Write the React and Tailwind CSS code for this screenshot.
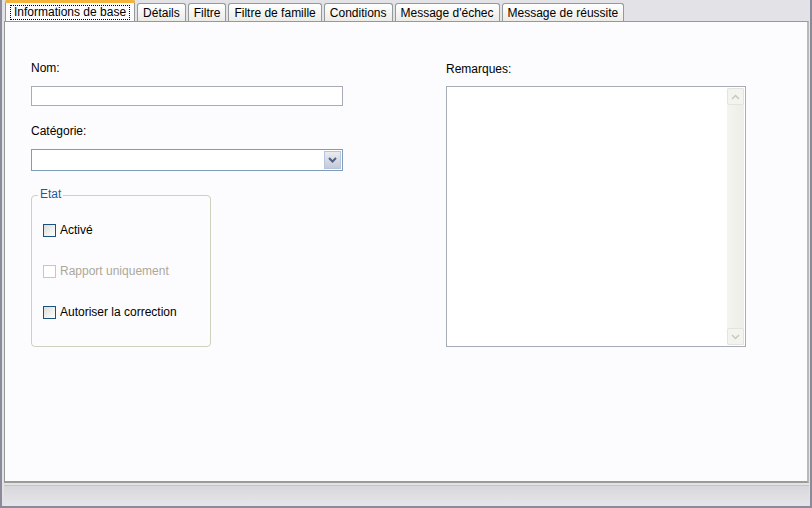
import React from "react";

const font = { fontFamily: "Tahoma, 'Liberation Sans', Arial, sans-serif" };

function Tab({ label, active }) {
  if (active) {
    return (
      <div className="relative -mb-px h-[21px] flex flex-col border border-b-0 border-[#919b9c] bg-[#fcfcfe] rounded-t-[3px] z-10">
        <div className="h-[3px] bg-[#f6b33c] rounded-t-[2px] -mx-px -mt-px" />
        <div className="flex-1 flex items-center px-[4px]">
          <span className="border border-dotted border-black px-[3px] leading-[13px] text-[12px] text-black">{label}</span>
        </div>
      </div>
    );
  }
  return (
    <div className="mt-[3px] h-[18px] flex items-center px-[5px] border border-b-0 border-[#919b9c] rounded-t-[3px] bg-gradient-to-b from-[#ffffff] to-[#ecebe6] text-[12px] text-black leading-none">
      {label}
    </div>
  );
}

function Checkbox({ label, disabled }) {
  return (
    <div className="flex items-center gap-[4px] h-[14px]">
      <div
        className={
          disabled
            ? "w-[13px] h-[13px] border border-[#c9c7ba] bg-white"
            : "w-[13px] h-[13px] border border-[#1c5180] bg-gradient-to-br from-[#dcdcd7] to-[#ffffff]"
        }
      />
      <span className={disabled ? "text-[12px] text-[#aca899]" : "text-[12px] text-black"}>{label}</span>
    </div>
  );
}

export default function App() {
  return (
    <div className="w-[812px] h-[508px] bg-[#e3e2e6] flex flex-col overflow-hidden" style={font}>
      <div className="flex-1 flex flex-col border-l-[2px] border-r-[2px] border-b-[2px] border-[#8a8a9a]">
        <div className="flex-1 flex flex-col pl-[2px] pr-[1px]">
          <div className="flex items-start gap-[2px] pl-[1px] h-[21px]">
            <Tab label="Informations de base" active />
            <Tab label="Détails" />
            <Tab label="Filtre" />
            <Tab label="Filtre de famille" />
            <Tab label="Conditions" />
            <Tab label="Message d'échec" />
            <Tab label="Message de réussite" />
          </div>
          <div className="h-[462px] border border-[#919b9c] border-b-[2px] border-b-[#9a9c96] border-r-[2px] border-r-[#b8bab4] bg-[#fcfcfe] flex gap-[103px] pl-[26px] pt-[38px]">
            <div className="flex flex-col w-[312px]">
              <div className="text-[12px] text-black leading-[13px] pt-[2px]">Nom:</div>
              <div className="mt-[11px] h-[20px] border border-[#a5acb5] bg-white" />
              <div className="mt-[19px] text-[12px] text-black leading-[13px]">Catégorie:</div>
              <div className="mt-[11px] h-[22px] border border-[#7f9db9] bg-white flex justify-end items-stretch p-px">
                <div className="w-[17px] border border-[#b5c4e0] bg-gradient-to-b from-[#ebebee] to-[#c5c9d8] flex items-center justify-center">
                  <svg width="9" height="6" viewBox="0 0 9 6">
                    <path d="M1 1 L4.5 4.5 L8 1" stroke="#4d6185" strokeWidth="2" fill="none" />
                  </svg>
                </div>
              </div>
              <div className="relative mt-[24px] w-[180px] h-[152px] border border-[#d0d0bf] rounded-[4px]">
                <div className="absolute -top-[8px] left-[6px] px-[2px] bg-[#fcfcfe] text-[12px] leading-[13px] text-[#1f5a9a]">Etat</div>
                <div className="flex flex-col gap-[27px] pl-[11px] pt-[27px]">
                  <Checkbox label="Activé" />
                  <Checkbox label="Rapport uniquement" disabled />
                  <Checkbox label="Autoriser la correction" />
                </div>
              </div>
            </div>
            <div className="flex flex-col w-[300px]">
              <div className="text-[12px] text-black leading-[13px] pt-[3px]">Remarques:</div>
              <div className="mt-[10px] h-[261px] border border-[#a5acb5] bg-white flex justify-end p-px">
                <div className="w-[17px] flex flex-col bg-gradient-to-r from-[#f4f4f0] to-[#eeeee8]">
                  <div className="h-[17px] border border-[#e4e4dc] rounded-[2px] bg-[#f4f4ef] flex items-center justify-center">
                    <svg width="9" height="6" viewBox="0 0 9 6">
                      <path d="M1 5 L4.5 1.5 L8 5" stroke="#c8c8c0" strokeWidth="1.5" fill="none" />
                    </svg>
                  </div>
                  <div className="flex-1" />
                  <div className="h-[17px] border border-[#e4e4dc] rounded-[2px] bg-[#f4f4ef] flex items-center justify-center">
                    <svg width="9" height="6" viewBox="0 0 9 6">
                      <path d="M1 1 L4.5 4.5 L8 1" stroke="#c8c8c0" strokeWidth="1.5" fill="none" />
                    </svg>
                  </div>
                </div>
              </div>
            </div>
          </div>
          <div className="flex-1 mt-[2px] bg-gradient-to-b from-[#d8d8dc] to-[#e6e6ea] border-t border-[#c4c4c8]" />
        </div>
      </div>
    </div>
  );
}
